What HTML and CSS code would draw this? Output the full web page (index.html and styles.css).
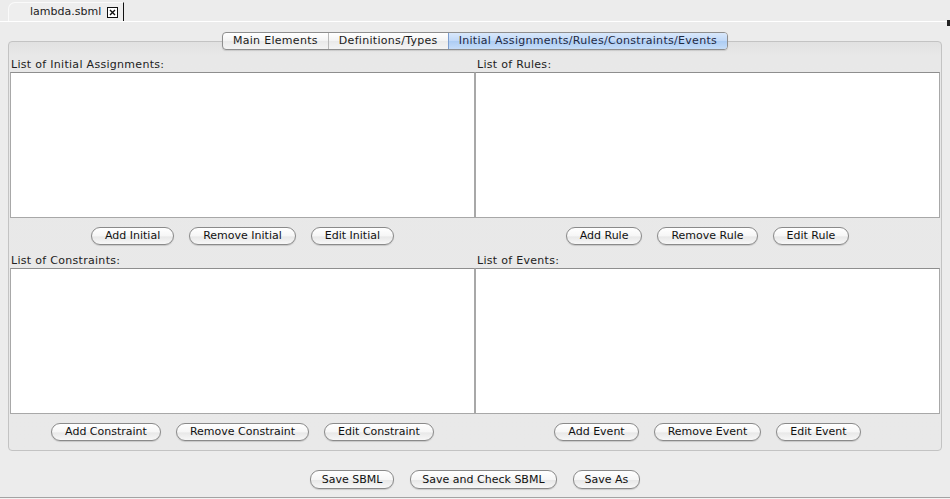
FILE: index.html
```html
<!DOCTYPE html>
<html>
<head>
<meta charset="utf-8">
<link rel="stylesheet" href="styles.css">
</head>
<body>
<div class="doc-tabs">
  <div class="doc-tab">
    <span class="doc-name">lambda.sbml</span>
    <span class="close"><svg width="11" height="11" viewBox="0 0 11 11"><rect x="0.5" y="0.5" width="10" height="10" fill="#fff" stroke="#111"/><path d="M3 3 L8 8 M8 3 L3 8" stroke="#111" stroke-width="1.4"/></svg></span>
  </div>
  <div class="edge-mark"></div>
</div>
<div class="main">
  <div class="seg">
    <div class="seg-item">Main Elements</div>
    <div class="seg-item">Definitions/Types</div>
    <div class="seg-item selected">Initial Assignments/Rules/Constraints/Events</div>
  </div>
  <div class="panel">
    <div class="grid">
      <div class="col">
        <div class="label">List of Initial Assignments:</div>
        <div class="list"></div>
        <div class="btns"><button class="btn">Add Initial</button><button class="btn">Remove Initial</button><button class="btn">Edit Initial</button></div>
      </div>
      <div class="col">
        <div class="label">List of Rules:</div>
        <div class="list"></div>
        <div class="btns"><button class="btn">Add Rule</button><button class="btn">Remove Rule</button><button class="btn">Edit Rule</button></div>
      </div>
      <div class="col">
        <div class="label">List of Constraints:</div>
        <div class="list"></div>
        <div class="btns"><button class="btn">Add Constraint</button><button class="btn">Remove Constraint</button><button class="btn">Edit Constraint</button></div>
      </div>
      <div class="col">
        <div class="label">List of Events:</div>
        <div class="list"></div>
        <div class="btns"><button class="btn">Add Event</button><button class="btn">Remove Event</button><button class="btn">Edit Event</button></div>
      </div>
    </div>
  </div>
  <div class="footer">
    <button class="btn">Save SBML</button><button class="btn">Save and Check SBML</button><button class="btn">Save As</button>
  </div>
</div>
<div class="bottom-line"></div>
</body>
</html>
```
FILE: styles.css
```css
* { box-sizing: border-box; }
html, body { margin: 0; padding: 0; }
body {
  width: 950px;
  height: 499px;
  overflow: hidden;
  background: #ececec;
  font-family: "DejaVu Sans", "Liberation Sans", sans-serif;
  font-size: 11px;
  color: #1a1a1a;
}
.doc-tabs {
  height: 22px;
  border-bottom: 1px solid #ffffff;
  display: flex;
  align-items: flex-end;
  justify-content: space-between;
}
.doc-tab {
  margin-left: 8px;
  height: 19px;
  width: 116px;
  padding-left: 21px;
  display: flex;
  align-items: center;
  gap: 6px;
  border-left: 1px solid #fafafa;
  border-top: 1px solid #fafafa;
  border-top-left-radius: 7px;
  border-right: 1px solid #111;
  background: #eeeeee;
}
.doc-name { color: #222; line-height: 14px; }
.close { display: flex; height: 11px; }
.edge-mark {
  width: 3px;
  height: 6px;
  background: #222;
  margin-bottom: -5px;
}
.main {
  padding: 0 8px;
}
.seg {
  position: relative;
  z-index: 1;
  margin: 10px auto 0;
  width: fit-content;
  display: flex;
  height: 18px;
  border: 1px solid #8e8e8e;
  border-radius: 4px;
  overflow: hidden;
  background: linear-gradient(#ffffff, #f3f3f3 50%, #e9e9e9 51%, #f4f4f4);
  box-shadow: 0 1px 1px rgba(0,0,0,0.12);
  letter-spacing: 0.3px;
}
.seg-item {
  padding: 0 10px;
  line-height: 16px;
  border-left: 1px solid #b9b9b9;
  color: #1a1a1a;
}
.seg-item:first-child { border-left: none; }
.seg-item.selected {
  background: linear-gradient(#d9e8fb, #c0d8f7 50%, #acccf3 51%, #c6ddf8);
  border-left-color: #7d9ecf;
  color: #1e2a44;
}
.panel {
  margin-top: -9px;
  height: 410px;
  border: 1px solid #c3c3c3;
  border-radius: 4px;
  background: linear-gradient(#e1e1e1, #e8e8e8 14px, #e9e9e9);
  padding: 16px 1px 0;
}
.grid {
  display: grid;
  grid-template-columns: 465px 465px;
}
.label {
  height: 14px;
  line-height: 14px;
  padding-left: 1px;
  color: #222;
  letter-spacing: 0.3px;
}
.col:nth-child(2) .label, .col:nth-child(4) .label { padding-left: 2px; }
.list {
  height: 146px;
  background: #ffffff;
  border: 1px solid #a8a8a8;
  border-top-color: #8e8e8e;
}
.btns {
  height: 36px;
  display: flex;
  justify-content: center;
  align-items: center;
  gap: 15px;
}
.btn {
  font-family: "DejaVu Sans", "Liberation Sans", sans-serif;
  font-size: 11px;
  color: #111;
  height: 18px;
  line-height: 16px;
  padding: 0 13px;
  border: 1px solid #8a8a8a;
  border-radius: 9px;
  background: linear-gradient(#ffffff, #f6f6f6 50%, #e8e8e8 55%, #f7f7f7);
  box-shadow: 0 1px 1px rgba(0,0,0,0.15);
  margin: 0;
}
.footer {
  margin-top: 19px;
  height: 19px;
  display: flex;
  justify-content: center;
  gap: 16px;
}
.footer .btn { height: 19px; line-height: 17px; padding: 0 11px; }
.bottom-line {
  margin-top: 8px;
  height: 3px;
  border-top: 1px solid #a3a3a3;
  background: #f3f3f3;
}
```
